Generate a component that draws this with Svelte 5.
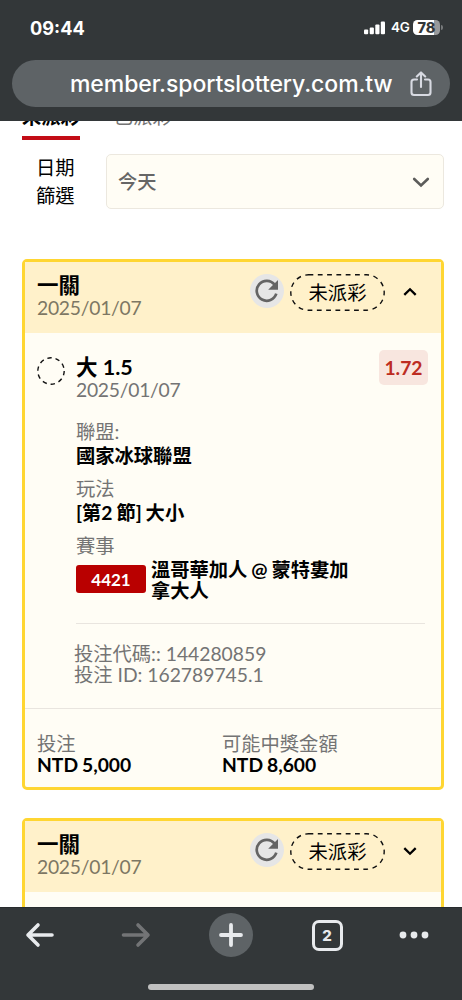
<script lang="ts">
  interface Bet {
    title: string;
    date: string;
    status: string;
    open: boolean;
  }

  const bets: Bet[] = [
    { title: '一關', date: '2025/01/07', status: '未派彩', open: true },
    { title: '一關', date: '2025/01/07', status: '未派彩', open: false },
  ];

  const details = [
    { label: '聯盟:', value: '國家冰球聯盟' },
    { label: '玩法', value: '[第2 節] 大小' },
  ];
</script>

<div class="screen">
  <header class="browser">
    <div class="status-bar">
      <span class="time">09:44</span>
      <div class="indicators">
        <svg class="signal" width="22" height="14" viewBox="0 0 22 14" fill="#fff">
          <rect x="0" y="8.5" width="4.2" height="4.8" rx="1" />
          <rect x="5.7" y="6.4" width="4.2" height="6.9" rx="1" />
          <rect x="11.3" y="3.4" width="4.2" height="9.9" rx="1" />
          <rect x="16.8" y="0.6" width="4.2" height="12.7" rx="1" />
        </svg>
        <span class="network">4G</span>
        <div class="battery"><span>78</span></div>
        <i class="battery-tip"></i>
      </div>
    </div>
    <div class="address">
      <span class="url">member.sportslottery.com.tw</span>
      <svg width="22" height="26" viewBox="0 0 22 26" fill="none" stroke="#d8dae2" stroke-width="2.1" stroke-linecap="round" stroke-linejoin="round">
        <path d="M7 8.5H4A2.5 2.5 0 0 0 1.5 11v10.500A2.500 2.500 0 0 0 4 24h14a2.500 2.500 0 0 0 2.500-2.500V11A2.500 2.500 0 0 0 18 8.500h-3M11 16V2M6.800 5.500 11 1.400l4.200 4.100" />
      </svg>
    </div>
  </header>

  <main>
    <nav class="tabs">
      <span class="tab active">未派彩</span>
      <span class="tab">已派彩</span>
    </nav>

    <div class="filter">
      <div class="filter-label">日期<br />篩選</div>
      <div class="select">
        <span>今天</span>
        <svg width="18" height="12" viewBox="0 0 18 12" fill="none" stroke="#5c5c5a" stroke-width="2.6" stroke-linecap="round">
          <path d="M2.200 3 9 9.500l6.800-6.500" />
        </svg>
      </div>
    </div>

    {#each bets as bet}
      <section class="card">
        <div class="card-head">
          <div class="heading">
            <div class="title">{bet.title}</div>
            <div class="muted date">{bet.date}</div>
          </div>
          <div class="refresh">
            <svg width="24" height="24" viewBox="0 0 24 24">
              <path d="M21.300 14.700A10 10 0 1 1 19.600 5.600" fill="none" stroke="#646464" stroke-width="2.700" />
              <path d="M23 1v9.800h-9.800z" fill="#646464" />
            </svg>
          </div>
          <div class="pill">
            <svg width="95" height="37" viewBox="0 0 95 37">
              <rect x=".8" y=".8" width="93.4" height="35.4" rx="17.7" fill="none" stroke="#111" stroke-width="1.4" stroke-dasharray="4.8 4.5" />
            </svg>
            <span>{bet.status}</span>
          </div>
          <svg class="toggle" width="14" height="10" viewBox="0 0 14 10" fill="none" stroke="#000" stroke-width="2.3">
            <path d={bet.open ? 'M1.300 7.900 7 2.300l5.700 5.600' : 'M1.300 2.100 7 7.700l5.700-5.600'} />
          </svg>
        </div>

        <div class="card-body">
          {#if bet.open}
            <div class="selection">
              <svg class="ring" width="28" height="28" viewBox="0 0 28 28">
                <circle cx="14" cy="14" r="13.2" fill="none" stroke="#111" stroke-width="1.4" stroke-dasharray="4.4 3.9" />
              </svg>
              <div class="pick">
                <div class="title">大 1.5</div>
                <div class="muted date">2025/01/07</div>
              </div>
              <span class="odds">1.72</span>
            </div>

            <div class="details">
              {#each details as item}
                <div class="detail">
                  <div class="muted">{item.label}</div>
                  <div class="strong">{item.value}</div>
                </div>
              {/each}
              <div class="muted">賽事</div>
              <div class="match">
                <span class="tag">4421</span>
                <div class="strong">溫哥華加人 @ 蒙特婁加<br />拿大人</div>
              </div>
              <div class="codes">
                <div>投注代碼:: 144280859</div>
                <div>投注 ID: 162789745.1</div>
              </div>
            </div>

            <div class="totals">
              <div>
                <div class="muted">投注</div>
                <div class="strong">NTD 5,000</div>
              </div>
              <div>
                <div class="muted">可能中獎金額</div>
                <div class="strong">NTD 8,600</div>
              </div>
            </div>
          {/if}
        </div>
      </section>
    {/each}
  </main>

  <footer class="toolbar">
    <div class="actions">
      <svg width="30" height="26" viewBox="0 0 30 26" fill="none" stroke="#e8eaed" stroke-width="3.6" stroke-linecap="round" stroke-linejoin="round">
        <path d="M27 13H3M13 3 3 13l10 10" />
      </svg>
      <svg width="30" height="26" viewBox="0 0 30 26" fill="none" stroke="#737476" stroke-width="3.6" stroke-linecap="round" stroke-linejoin="round">
        <path d="M2.500 13H27M17 3l10 10-10 10" />
      </svg>
      <div class="new-tab">
        <svg width="26" height="26" viewBox="0 0 26 26" stroke="#e8eaed" stroke-width="3.8" stroke-linecap="round">
          <path d="M3 13h20M13 3v20" />
        </svg>
      </div>
      <div class="tab-count">2</div>
      <svg width="30" height="8" viewBox="0 0 30 8" fill="#e8eaed">
        <circle cx="4" cy="4" r="3.400" />
        <circle cx="15" cy="4" r="3.400" />
        <circle cx="26" cy="4" r="3.400" />
      </svg>
    </div>
    <div class="home-indicator"></div>
  </footer>
</div>

<style>
  :global(body) { margin: 0; background: #fff; }
  .screen, .screen * { box-sizing: border-box; }
  .screen {
    display: grid;
    grid-template-rows: 121px 786px 93px;
    width: 462px;
    height: 1000px;
    overflow: hidden;
    font-family: Lato, "Noto Sans CJK TC", sans-serif;
    font-size: 19.3px;
    line-height: 21px;
    color: #000;
  }
  svg { display: block; flex: none; }

  .browser {
    padding: 0 12px;
    background: #333739;
    font-family: Inter, sans-serif;
    color: #fff;
  }
  .status-bar {
    display: flex;
    justify-content: space-between;
    height: 60px;
    padding: 17px 7px 0 18px;
  }
  .time {
    font-size: 18.2px;
    font-weight: 700;
    line-height: 22px;
  }
  .indicators {
    display: flex;
    align-items: center;
    height: 21px;
  }
  .network {
    margin-left: 5px;
    width: 22px;
    font-size: 13.5px;
    font-weight: 600;
    letter-spacing: -0.2px;
    white-space: nowrap;
  }
  .battery {
    width: 27px;
    height: 15px;
    border-radius: 4.5px;
    background: linear-gradient(90deg, #fff 78%, #98999b 78%);
    color: #333739;
    font-size: 14.5px;
    font-weight: 800;
    line-height: 15px;
    text-align: center;
  }
  .battery-tip {
    width: 2px;
    height: 5px;
    margin-left: 1px;
    border-radius: 0 2px 2px 0;
    background: #77797b;
  }
  .address {
    display: flex;
    align-items: center;
    justify-content: space-between;
    height: 47px;
    padding: 0 18px 0 58px;
    border-radius: 24px;
    background: #5e6366;
  }
  .url {
    font-size: 23px;
    font-weight: 500;
    line-height: 28px;
    letter-spacing: -0.08px;
    white-space: nowrap;
  }

  main {
    overflow: hidden;
    padding: 0 18px 0 22px;
    background: #fff;
  }
  .tabs {
    display: flex;
    gap: 34px;
    height: 19px;
    margin-bottom: 14px;
  }
  .tab {
    height: 39px;
    padding-top: 5px;
    margin-top: -20px;
    color: #747474;
    white-space: nowrap;
  }
  .tab.active {
    border-bottom: 4px solid #c30d16;
    color: #000;
    font-weight: 700;
  }
  .filter {
    display: flex;
    height: 55px;
    margin-bottom: 50px;
  }
  .filter-label {
    width: 84px;
    padding-left: 14px;
    line-height: 28px;
  }
  .select {
    display: flex;
    flex: 1;
    align-items: center;
    justify-content: space-between;
    padding: 0 13px 0 11px;
    border: 1.5px solid #ece8df;
    border-radius: 5px;
    background: #fffdf5;
    color: #666;
    font-weight: 500;
  }

  .card {
    width: 422px;
    margin-bottom: 28px;
    border: 3px solid #ffd632;
    border-radius: 5px;
    background: #fffdf5;
  }
  .card-head {
    display: flex;
    height: 71px;
    padding: 12px 0 0 12px;
    background: #fff1ca;
  }
  .heading { width: 213px; }
  .title {
    height: 23px;
    font-size: 21.5px;
    font-weight: 700;
    line-height: 23px;
  }
  .muted { color: #747474; font-weight: 400; }
  .card-head .muted { color: #7d7763; }
  .date { letter-spacing: -0.25px; }
  .strong { font-weight: 700; word-spacing: -0.8px; }
  .refresh {
    display: grid;
    place-items: center;
    width: 34px;
    height: 34px;
    border-radius: 50%;
    background: #e6e6e6;
  }
  .pill {
    position: relative;
    width: 95px;
    height: 37px;
    margin-left: 6px;
    line-height: 38px;
    text-align: center;
  }
  .pill svg { position: absolute; inset: 0; }
  .toggle { margin: 13px 0 0 18px; }

  .card-body { min-height: 80px; }
  .selection {
    display: flex;
    padding: 23px 13px 0 12px;
  }
  .ring { margin-top: 1px; }
  .pick {
    flex: 1;
    margin-left: 11px;
  }
  .odds {
    width: 49px;
    height: 35px;
    margin-top: -6px;
    border-radius: 5px;
    background: #f8e6df;
    color: #bd2c22;
    font-weight: 700;
    line-height: 35px;
    text-align: center;
  }
  .details { padding: 21px 16px 0 51px; }
  .detail { height: 57px; }
  .detail .strong { margin-top: 3px; }
  .match {
    display: flex;
    height: 68px;
    padding-top: 3px;
    border-bottom: 1.5px solid #e9e5df;
  }
  .tag {
    width: 70px;
    height: 28px;
    margin: 6px 5px 0 0;
    border-radius: 3px;
    background: #b90000;
    color: #fff;
    font-size: 17px;
    font-weight: 700;
    line-height: 29px;
    text-align: center;
  }
  .codes {
    margin: 19px 0 0 -2px;
    color: #747474;
  }
  .totals {
    display: grid;
    grid-template-columns: 185px 1fr;
    height: 79px;
    margin-top: 23px;
    padding: 24px 0 0 12px;
    border-top: 1.5px solid #e9e5df;
  }

  .toolbar {
    display: flex;
    flex-direction: column;
    align-items: center;
    background: #333739;
    border-top: 1px solid #282c2e;
  }
  .actions {
    display: grid;
    grid-template-columns: 80px 112px 78px 114px 60px;
    place-items: center;
    width: 100%;
    height: 54px;
  }
  .new-tab {
    display: grid;
    place-items: center;
    width: 44px;
    height: 44px;
    border-radius: 50%;
    background: #5e6366;
  }
  .tab-count {
    width: 31px;
    height: 31px;
    border: 3px solid #e8eaed;
    border-radius: 7px;
    color: #e8eaed;
    font: 800 15px/25px Inter, sans-serif;
    text-align: center;
  }
  .home-indicator {
    width: 166px;
    height: 6px;
    margin-top: 22px;
    border-radius: 3px;
    background: #c0c0c0;
  }
</style>
